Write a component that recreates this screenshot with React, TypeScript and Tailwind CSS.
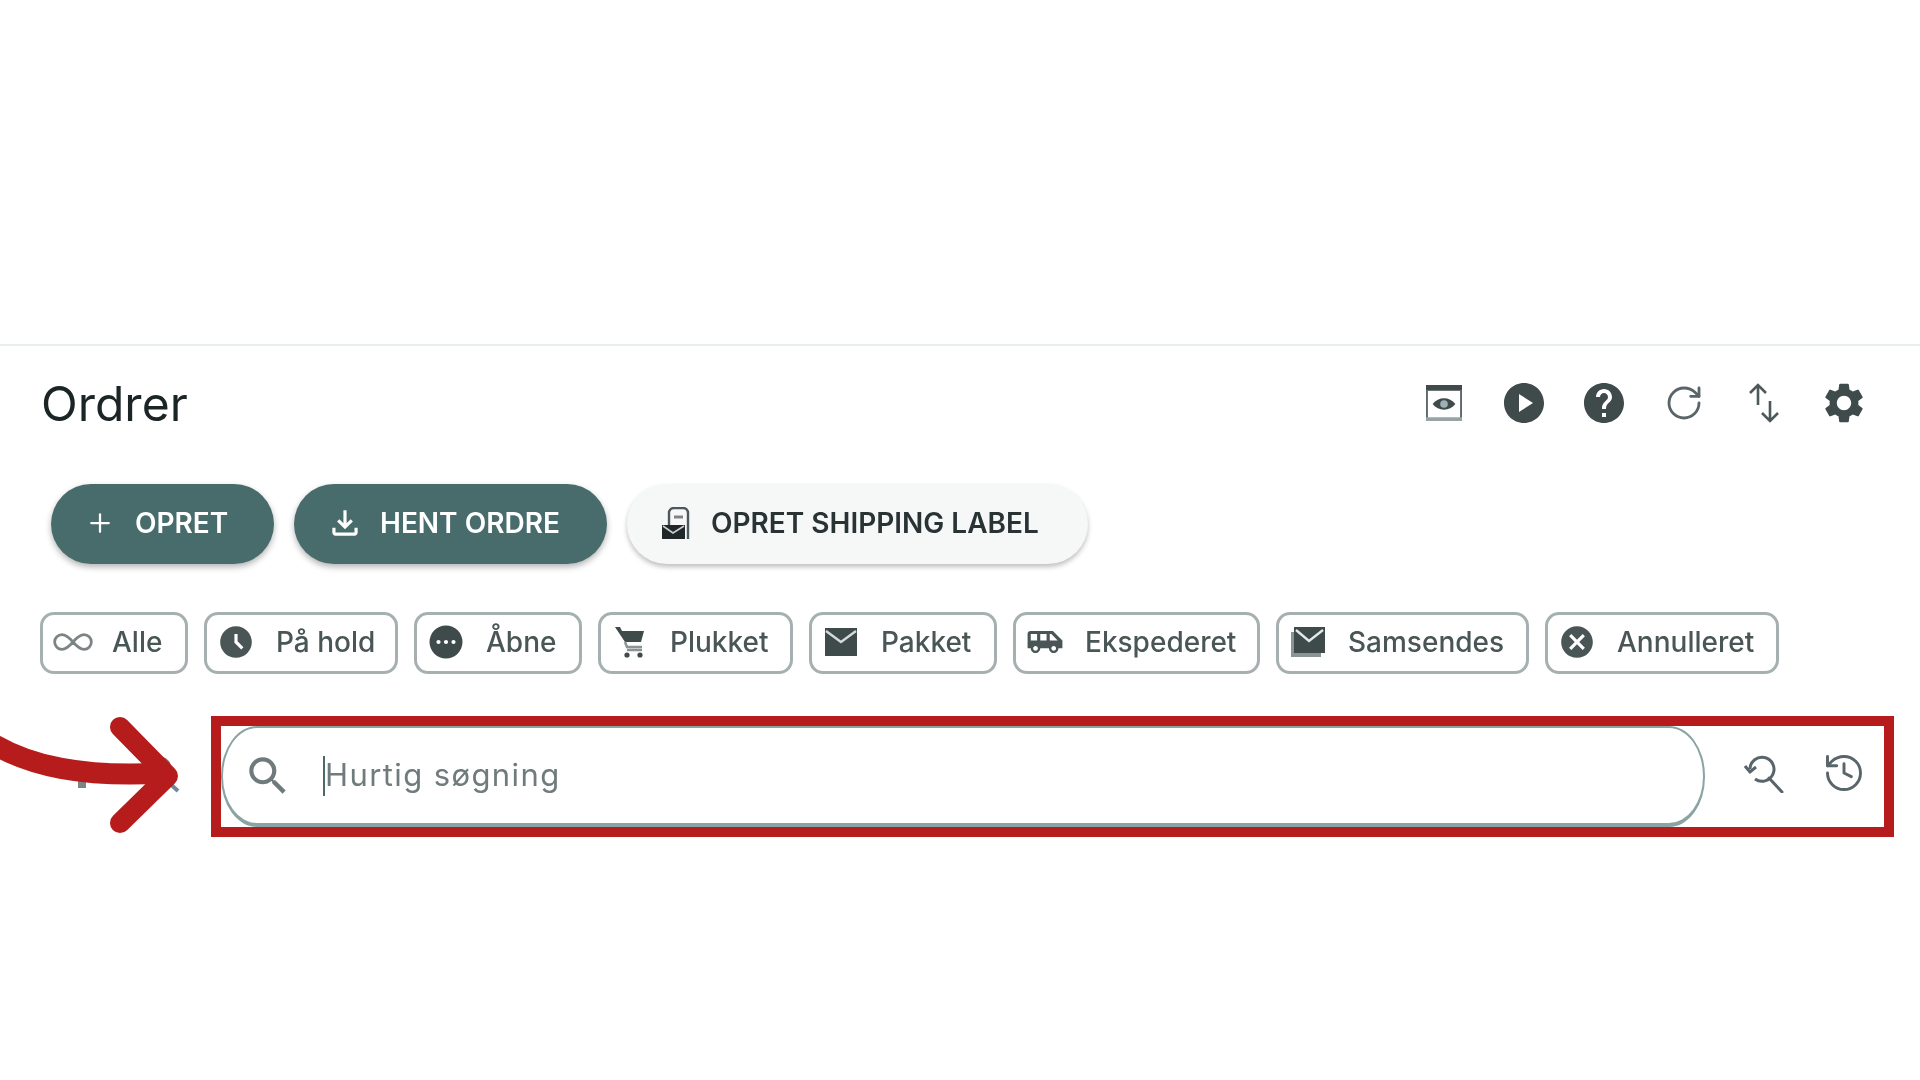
import React from 'react';
import { History, Infinity as InfinityIcon, Plus, RotateCw } from 'lucide-react';
import {
  MdAccessTimeFilled,
  MdAirportShuttle,
  MdCancel,
  MdHelp,
  MdOutlineFileDownload,
  MdPlayCircle,
  MdSearch,
  MdSettings,
} from 'react-icons/md';

const dark = '#3f4a4b';

const MoreCircle = () => (
  <svg viewBox="0 0 24 24" className="h-[36px] w-[36px]" fill={dark}>
    <path
      fillRule="evenodd"
      d="M12 1a11 11 0 1 0 0 22 11 11 0 0 0 0-22zM7 10.6a1.4 1.4 0 1 1 0 2.8 1.4 1.4 0 0 1 0-2.8zm5 0a1.4 1.4 0 1 1 0 2.8 1.4 1.4 0 0 1 0-2.8zm5 0a1.4 1.4 0 1 1 0 2.8 1.4 1.4 0 0 1 0-2.8z"
    />
  </svg>
);

const Cart = () => (
  <svg viewBox="0 0 30 32" className="h-[32px] w-[30px]">
    <path d="M0 1h5l2 4h22l-3 11H10z" fill={dark} />
    <path d="M10 16l2 5h15M12 24h15" fill="none" stroke="#8b9495" strokeWidth="2.5" />
    <circle cx="12" cy="29" r="2.6" fill={dark} />
    <circle cx="25" cy="29" r="2.6" fill={dark} />
  </svg>
);

const Mail = () => (
  <svg viewBox="0 0 32 28" className="h-[28px] w-[32px]">
    <rect width="32" height="28" fill={dark} />
    <path d="M1 3l15 11L31 3" fill="none" stroke="#d5dada" strokeWidth="2.4" />
  </svg>
);

const Samsendes = () => (
  <svg viewBox="0 0 34 30" className="h-[30px] w-[34px]">
    <rect x="0" y="5" width="30" height="25" fill="#8b9495" />
    <rect x="3" y="0" width="31" height="26" fill={dark} />
    <path d="M5 3l13 11L32 3" fill="none" stroke="#e4e8e8" strokeWidth="2.4" />
  </svg>
);

const chips = [
  { label: 'Alle', w: 'w-[148px]', icon: <InfinityIcon size={44} strokeWidth={1.5} className="ml-[2px] shrink-0 text-[#7c8485]" /> },
  { label: 'På hold', w: 'w-[194px]', icon: <MdAccessTimeFilled size={38} className="shrink-0" /> },
  { label: 'Åbne', w: 'w-[168px]', icon: <MoreCircle /> },
  { label: 'Plukket', w: 'w-[195px]', icon: <Cart /> },
  { label: 'Pakket', w: 'w-[188px]', icon: <Mail /> },
  { label: 'Ekspederet', w: 'w-[247px]', icon: <MdAirportShuttle size={38} className="shrink-0" /> },
  { label: 'Samsendes', w: 'w-[253px]', icon: <Samsendes /> },
  { label: 'Annulleret', w: 'w-[234px]', icon: <MdCancel size={38} className="shrink-0" /> },
];

const PreviewIcon = () => (
  <svg viewBox="0 0 38 38" className="h-[36px] w-[36px]">
    <path d="M0 0h38v38H0z" fill="#fff" />
    <path d="M0 0h38v6H0z" fill={dark} />
    <path d="M1 6v31h36V6" fill="none" stroke="#5d686a" strokeWidth="2" />
    <path d="M0 34h38v4H0z" fill="#9aa3a3" />
    <path d="M7 20c6-8 18-8 24 0-6 8-18 8-24 0z" fill={dark} />
    <circle cx="19" cy="20" r="4" fill="#9fb0b5" />
  </svg>
);

const SwapIcon = () => (
  <svg viewBox="0 0 32 40" className="h-[40px] w-[32px]" fill="none" stroke="#4d585a" strokeWidth="2.6">
    <path d="M10 2v20M2 10l8-8 8 8" />
    <path d="M22 18v20M14 30l8 8 8-8" />
  </svg>
);

const ShippingLabel = () => (
  <svg viewBox="0 0 32 32" className="h-[32px] w-[32px] shrink-0">
    <path d="M7 20V6a5 5 0 0 1 5-5h9a5 5 0 0 1 5 5v26" fill="none" stroke="#4d585a" strokeWidth="2.4" />
    <path d="M12 10h9" stroke="#7c8485" strokeWidth="3" />
    <path d="M0 18h23v14H0z" fill="#1f2728" />
    <path d="M1 19l10 7 11-7" fill="none" stroke="#c9cfcf" strokeWidth="1.6" />
  </svg>
);

const SearchHistory = () => (
  <svg viewBox="0 0 40 40" className="h-[40px] w-[40px]" fill="none" stroke="#59656a" strokeWidth="3">
    <path d="M6 16a12 12 0 1 1 5 10" />
    <path d="M1 13l5 6 6-5" />
    <path d="M25 25l13 14" strokeLinecap="round" />
  </svg>
);

// the annotation arrow lies over the filter and search icons of the toolbar
const Arrow = () => (
  <svg viewBox="0 0 190 140" className="absolute left-0 top-[-16px] h-[140px] w-[190px]" fill="none">
    <path d="M63 63h35v5L86 80v8h-8v-8L63 68z" fill="#7c8485" />
    <circle cx="158" cy="70" r="12" stroke="#6f7a7c" strokeWidth="4" />
    <path d="M166 80l12 11" stroke="#6f8a9c" strokeWidth="4" />
    <path d="M-5 45C30 65 80 78 165 73" stroke="#b71c1c" strokeWidth="21" />
    <path d="M120 27L168 76 120 123" stroke="#b71c1c" strokeWidth="20" strokeLinecap="round" strokeLinejoin="round" />
  </svg>
);

export default function App() {
  return (
    <div className="min-h-screen bg-white font-['Inter','Liberation_Sans',sans-serif] text-[#3f4a4b]">
      <div className="h-[344px]" />
      <div className="h-[2px] bg-[#e8eeee]" />

      <div className="blur-[0.6px]">
        <div className="flex h-[118px] items-center justify-between pl-[41px] pr-[52px]">
          <h1 className="pb-[2px] text-[48px] font-normal leading-none text-[#1c2526]">Ordrer</h1>
          <div className="flex items-center gap-[32px] pb-[4px]">
            <div className="flex w-[48px] justify-center"><PreviewIcon /></div>
            <MdPlayCircle size={48} />
            <MdHelp size={48} />
            <RotateCw size={40} strokeWidth={1.7} className="mx-[4px] text-[#59656a]" />
            <div className="flex w-[48px] justify-center"><SwapIcon /></div>
            <MdSettings size={48} />
          </div>
        </div>

        <div className="mt-[20px] flex items-center gap-[20px] pl-[51px]">
          <button className="flex h-[80px] w-[223px] items-center gap-[20px] rounded-full bg-[#486b6c] pb-[3px] pl-[34px] text-[28px] font-semibold text-white shadow-[0_3px_6px_rgba(0,0,0,0.3)]">
            <Plus size={30} strokeWidth={1.8} />
            OPRET
          </button>
          <button className="flex h-[80px] w-[313px] items-center gap-[16px] rounded-full bg-[#486b6c] pb-[3px] pl-[32px] text-[28px] font-semibold text-white shadow-[0_3px_6px_rgba(0,0,0,0.3)]">
            <MdOutlineFileDownload size={38} />
            HENT ORDRE
          </button>
          <button className="flex h-[80px] w-[461px] items-center gap-[17px] rounded-full bg-[#f6f8f8] pb-[3px] pl-[35px] text-[28px] font-semibold text-[#2a3334] shadow-[0_3px_5px_rgba(0,0,0,0.25)]">
            <ShippingLabel />
            OPRET SHIPPING LABEL
          </button>
        </div>

        <div className="mt-[48px] flex gap-[16px] pl-[40px]">
          {chips.map((chip) => (
            <div
              key={chip.label}
              className={`flex h-[62px] items-center ${chip.w} gap-[20px] rounded-[14px] border-[3px] border-[#a7b0b0] pb-[2px] pl-[9px] text-[28px] font-medium text-[#4a5556]`}
            >
              <div className="flex w-[40px] justify-center">{chip.icon}</div>
              <span>{chip.label}</span>
            </div>
          ))}
        </div>
      </div>

      <div className="relative mt-[42px] pl-[211px] pr-[26px]">
        <div className="border-[10px] border-[#b71c1c]">
          <div className="flex h-[101px] items-center">
            <div className="flex h-full w-[1484px] items-center rounded-[36px/50px] border-2 border-b-[4px] border-[#8aa3a3] pl-[20px] blur-[0.6px]">
              <MdSearch size={50} className="text-[#6f7a7c]" />
              <div className="ml-[30px] h-[40px] w-[2px] bg-[#4a6a6a]" />
              <span className="text-[31px] tracking-[1.4px] text-[#6f7b7c]">Hurtig søgning</span>
            </div>
            <div className="ml-[39px] flex items-center gap-[38px] pb-[8px] blur-[0.6px]">
              <SearchHistory />
              <History size={44} strokeWidth={1.6} className="text-[#59656a]" />
            </div>
          </div>
        </div>
        <Arrow />
      </div>
    </div>
  );
}
